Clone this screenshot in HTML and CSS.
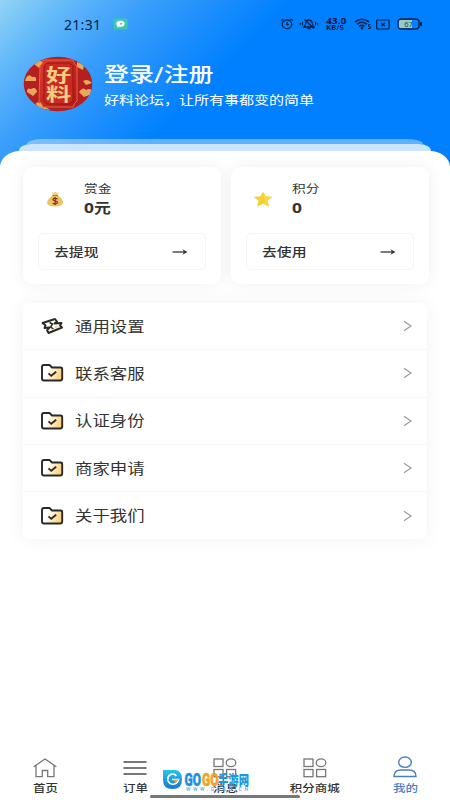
FILE: index.html
```html
<!DOCTYPE html>
<html lang="zh-CN">
<head>
<meta charset="utf-8">
<title>我的</title>
<link rel="stylesheet" href="styles.css">
</head>
<body>
<svg width="0" height="0" class="defs">
  <defs>
    <linearGradient id="fold" x1="0" x2="1" y1="0" y2=".3"><stop offset=".35" stop-color="#fff"/><stop offset="1" stop-color="#ffd287"/></linearGradient>
    <symbol id="folder" viewBox="0 0 24 20">
      <path d="M2 4Q2 2 4 2H9.500L12 4.500H20.500Q22.200 4.500 22.200 6V15.500Q22.200 17.500 20.200 17.500H4Q2 17.500 2 15.500Z" fill="url(#fold)" stroke="#2b2928" stroke-width="1.900" stroke-linejoin="round"/>
      <path d="M8.500 10.300L11.200 12.800L16.200 8.700" fill="none" stroke="#2b2928" stroke-width="1.800"/>
    </symbol>
    <symbol id="chev" viewBox="0 0 9 12"><path d="M1 1.300L8 6L1 10.700" fill="none" stroke="#999" stroke-width="1.200"/></symbol>
    <symbol id="arrow" viewBox="0 0 16 8"><path d="M.5 4H13" fill="none" stroke="#333" stroke-width="1.300"/><path d="M10.500 1.200L15.500 4L10.500 6.800L12 4Z" fill="#333"/></symbol>
    <symbol id="grid" viewBox="0 0 24 20"><g fill="none" stroke="#777" stroke-width="1.300"><rect x="1" y="1" width="9" height="7.500"/><ellipse cx="18" cy="4.800" rx="4.800" ry="3.900"/><rect x="1" y="11.500" width="9" height="7.200"/><rect x="13.600" y="11.500" width="9" height="7.200"/></g></symbol>
  </defs>
</svg>
<main class="app">
  <header class="hero">
    <div class="status">
      <span class="clock">21:31</span>
      <svg class="msg" width="15" height="12" viewBox="0 0 15 12"><rect x=".5" y=".5" width="14" height="11" rx="2" fill="#3cc7ae"/><ellipse cx="7.500" cy="5.700" rx="4.200" ry="3" fill="#fff"/><path d="M5 7L4 9.500L8 8Z" fill="#fff"/><circle cx="8" cy="5.700" r="1" fill="#3cc7ae"/></svg>
      <div class="status-icons">
        <svg width="14" height="12" viewBox="0 0 14 12" fill="none" stroke="#082350" stroke-width="1.300"><ellipse cx="7" cy="6.300" rx="4.800" ry="4.300"/><path d="M1 2.500L3.500 1M13 2.500L10.500 1M7 4V6.600H9"/></svg>
        <svg class="bell" width="20" height="12" viewBox="0 0 20 12" fill="none" stroke="#082350" stroke-width="1.300"><path d="M5 9H15Q13.500 7.500 13.300 5Q12.500 2 10 2Q7.500 2 6.700 5Q6.500 7.500 5 9ZM8.500 10.500H11.500M5.500 1.500L15 10.500M3.500 4V7.500M1.300 5V6.700M16.500 4V7.500M18.700 5V6.700"/></svg>
        <span class="speed"><b class="wide">43.0</b><i class="wide">KB/S</i></span>
        <svg class="wifi" width="18" height="12" viewBox="0 0 18 12" fill="none" stroke="#082350" stroke-width="1.600"><path d="M1 4Q8 -1.500 15 4M3 6.300Q8 2.300 13 6.300M5.200 8.500Q8 6.300 10.500 8.500"/><circle cx="8" cy="10.300" r=".6"/><path d="M16.500 6.500H14.500V8.500H16.300V10.500H14" stroke-width="1"/></svg>
        <svg class="sim" width="14" height="11" viewBox="0 0 14 11" fill="none" stroke="#082350" stroke-width="1.200"><rect x=".7" y="1" width="12.400" height="9" rx="1"/><path d="M5 4L9 7M9 4L5 7" stroke-width="1.500"/></svg>
        <svg class="battery" width="26" height="12" viewBox="0 0 26 12"><path d="M3 2H15V10H3Q2 10 2 9V3Q2 2 3 2Z" fill="#9ccbbd"/><rect x="1" y="1" width="21" height="10" rx="3" fill="none" stroke="#082350" stroke-width="1.300"/><path d="M24 4V8" stroke="#082350" stroke-width="1.800"/><text x="11.500" y="8.600" text-anchor="middle" class="bat">67</text></svg>
      </div>
    </div>
    <div class="profile">
      <svg class="avatar" width="70" height="56" viewBox="0 0 70 56">
        <defs>
          <clipPath id="oval"><ellipse cx="35" cy="28" rx="34.300" ry="27.300"/></clipPath>
          <linearGradient id="red" x1="0" y1="0" x2="1" y2="1"><stop stop-color="#df3a2c"/><stop offset="1" stop-color="#b3171a"/></linearGradient>
        </defs>
        <g clip-path="url(#oval)">
          <rect width="70" height="56" fill="#b51f20"/>
          <g fill="#e7a959"><path d="M3 22Q6 17 9 21Q14 20 13 25H2Z"/><path d="M4 36Q4 31 8 33Q13 30 14 36L10 40Z"/><path d="M11 8Q17 2 20 7L16 12Z"/><path d="M54 6L61 9L60 14L54 11Z"/><path d="M56 36Q60 30 63 34Q69 31 69 38L61 41Z"/><path d="M60 25Q65 22 69 27L63 29Z"/><path d="M13 47Q16 45 20 49L27 54L14 52Z"/></g>
          <path d="M17 10Q20 8 20 4H50Q51 8 54 10V45Q51 47 50 51H20Q19 47 16 45Z" fill="url(#red)" stroke="#e0683c" stroke-width="1"/>
          <path d="M21 10L24 7H46L50 10V45L46 48H24L21 45Z" fill="#cb2a22" stroke="#8f1817" stroke-width="1"/>
          <g class="avatar-text"><text transform="translate(35.500 25.500) scale(1.400 1)" text-anchor="middle">好</text><text transform="translate(35.500 44.500) scale(1.400 1)" text-anchor="middle">料</text></g>
        </g>
      </svg>
      <div class="who"><div class="login wide">登录/注册</div><div class="tagline wide">好料论坛，让所有事都变的简单</div></div>
    </div>
    <div class="layer back"></div>
    <div class="layer front"></div>
  </header>
  <section class="sheet">
    <div class="cards">
      <div class="card">
        <div class="balance">
          <svg width="18" height="16" viewBox="0 0 18 16"><path d="M6 1L8 2L9 .5L11 2L13 1L11.300 4.500H7Z" fill="#f3cd78"/><path d="M7 4H11.500Q17 8 17 11.500Q17 15.500 9 15.500T1 11.500Q1.500 8 7 4Z" fill="#efc263"/><path d="M6.500 4.600H12" stroke="#a8723d"/><path d="M11.500 7.800Q7 6.500 7 8.600Q7 9.800 9.200 10Q11.600 10.300 11.500 11.700Q11 13.500 6.700 12.300M9.200 6V14" fill="none" stroke="#7c3820" stroke-width="1.200"/></svg>
          <div><div class="label wide">赏金</div><div class="amount wide"><b>0</b>元</div></div>
        </div>
        <div class="action"><span class="wide">去提现</span><svg width="16" height="8"><use href="#arrow"/></svg></div>
      </div>
      <div class="card">
        <div class="balance">
          <svg width="20" height="16" viewBox="0 0 20 16"><path d="M10 .5L12.500 5.300L19.500 6L14.500 9.700L16 15.500L10 12.800L4 15.500L5.500 9.700L.5 6L7.500 5.300Z" fill="#f8cf32"/><path d="M10 1L12.500 5.300L19 6L14 9.500L15.500 15L11 12Z" fill="#fbd640"/></svg>
          <div><div class="label wide">积分</div><div class="amount wide"><b>0</b></div></div>
        </div>
        <div class="action"><span class="wide">去使用</span><svg width="16" height="8"><use href="#arrow"/></svg></div>
      </div>
    </div>
    <div class="menu">
      <div class="row"><svg class="lead" width="24" height="20" viewBox="0 0 24 20"><path d="M2.500 7L15 3L17 5.500L14.500 7.500L21.500 7L20 9.500L22 11.500L8.500 17L7 14.300L9.500 11.500L4.500 12L5.500 9.300Z" fill="#fffbed" stroke="#2b2928" stroke-width="1.900" stroke-linejoin="round"/><path d="M9.500 6.500L12.500 8L10.500 11L13.500 13" fill="none" stroke="#2b2928" stroke-width="1.500"/><path d="M15 10.500L19 9.500L15.500 12.500Z" fill="#e8cc80"/></svg><span class="wide">通用设置</span><svg class="chev" width="9" height="12"><use href="#chev"/></svg></div>
      <div class="row"><svg class="lead" width="24" height="20"><use href="#folder"/></svg><span class="wide">联系客服</span><svg class="chev" width="9" height="12"><use href="#chev"/></svg></div>
      <div class="row"><svg class="lead" width="24" height="20"><use href="#folder"/></svg><span class="wide">认证身份</span><svg class="chev" width="9" height="12"><use href="#chev"/></svg></div>
      <div class="row"><svg class="lead" width="24" height="20"><use href="#folder"/></svg><span class="wide">商家申请</span><svg class="chev" width="9" height="12"><use href="#chev"/></svg></div>
      <div class="row"><svg class="lead" width="24" height="20"><use href="#folder"/></svg><span class="wide">关于我们</span><svg class="chev" width="9" height="12"><use href="#chev"/></svg></div>
    </div>
  </section>
  <nav class="tabs">
    <div class="tab"><svg width="24" height="20" viewBox="0 0 24 20" fill="none" stroke="#777" stroke-width="1.300"><path d="M.7 8.700L12 1L23.300 8.700M3 7.500V18.700H9.300V12.500H14.700V18.700H21V7.500"/></svg><span>首页</span></div>
    <div class="tab"><svg width="24" height="20" viewBox="0 0 24 20" stroke="#777" stroke-width="2"><path d="M.5 4H23.500M.5 10H23.500M.5 16H23.500"/></svg><span>订单</span></div>
    <div class="tab"><svg width="24" height="20"><use href="#grid"/></svg><span>消息</span></div>
    <div class="tab"><svg width="24" height="20"><use href="#grid"/></svg><span>积分商城</span></div>
    <div class="tab active"><svg width="24" height="22" viewBox="0 0 24 22" fill="none" stroke="#4a7fc5" stroke-width="1.400"><ellipse cx="12" cy="6.200" rx="6.300" ry="5.200"/><path d="M1 20.500Q1 14 8 14H16Q23 14 23 20.500Z"/></svg><span>我的</span></div>
  </nav>
  <div class="home-bar"></div>
  <svg class="mark" width="90" height="24" viewBox="0 0 90 24">
    <defs><linearGradient id="sky" x1="0" y1="0" x2="0" y2="1"><stop stop-color="#29c4ee"/><stop offset="1" stop-color="#1478d2"/></linearGradient></defs>
    <path d="M1 1H14Q20 2 20 10.500Q20 20 10.500 20Q1 20 1 11Z" fill="url(#sky)"/>
    <path d="M14.500 7Q12 4 8.500 5.500Q5 7.500 6 12Q8 16 12.500 15Q16 13.500 16.500 10.500H10" fill="none" stroke="#fff" stroke-width="1.600"/><path d="M10.500 10.500H17L14 13.500Z" fill="#f7a51c"/>
    <g class="mark-text"><text x="22.500" y="17" textLength="16.500" lengthAdjust="spacingAndGlyphs" fill="#1d91dc" stroke="#1d91dc">GO</text><text x="40" y="17" textLength="16.500" lengthAdjust="spacingAndGlyphs" fill="#f7a01d" stroke="#f7a01d">GO</text><text class="cn" x="56" y="15.500" textLength="31" lengthAdjust="spacingAndGlyphs" fill="#1c98dd">手游网</text></g>
    <text class="url" x="24" y="21.500" textLength="62">WWW.GOGO.CN</text>
  </svg>
</main>
</body>
</html>
```

FILE: styles.css
```css
* { box-sizing: border-box; }
body { margin: 0; background: #fff; color: #333; font-family: Roboto, "Noto Sans CJK SC", sans-serif; }
svg { display: block; flex: none; }
.defs { position: absolute; }
.app { position: relative; width: 450px; height: 800px; overflow: hidden; display: flex; flex-direction: column; background: linear-gradient(135deg, #92d4f5 0, #62b8fa 50px, #3a9efb 105px, #1b8dfd 160px, #0080ff 205px); }
/* Horizontally extended lettering used across the interface */
.wide { display: block; white-space: nowrap; transform: scaleX(1.2); transform-origin: left center; }
.hero { height: 151px; flex: none; display: flex; flex-direction: column; align-items: center; }
.status { width: 450px; height: 48px; padding: 0 27px 0 64px; display: flex; align-items: center; color: #07204a; }
.clock { width: 49px; font: 14px "Noto Sans", sans-serif; letter-spacing: .3px; }
.status-icons { margin-left: auto; display: flex; align-items: center; }
.bell { margin: 0 7px 0 5px; }
.speed { width: 20px; line-height: 7px; }
.wifi { margin: 0 4px 0 8px; }
.battery { margin-left: 7px; }
.speed b { font: bold 8.500px/8px "Noto Sans", sans-serif; }
.speed i { font: bold 6.500px/6px "Noto Sans", sans-serif; }
.bat { font: 7.500px "Noto Sans", sans-serif; fill: #174964; }
.profile { width: 450px; height: 91px; padding: 8px 0 0 23px; display: flex; align-items: flex-start; gap: 11px; color: #fff; }
.avatar-text { font: 700 18px "Noto Sans CJK SC", sans-serif; fill: #f5cd80; }
.login { margin-top: 5px; font-size: 20.800px; font-weight: 500; line-height: 28px; }
.tagline { font-size: 12.500px; line-height: 23px; }
.layer { flex: none; }
.back { width: 396px; height: 5px; background: rgba(255,255,255,.38); border-radius: 16px 16px 0 0 / 5px 5px 0 0; }
.front { width: 412px; height: 7px; background: #cce5ff; border-radius: 12px 12px 0 0 / 7px 7px 0 0; }
.sheet { flex: 1; padding: 16px 22px 0 23px; background: #fff; border-radius: 20px 20px 0 0 / 16px 16px 0 0; }
.cards { display: grid; grid-template-columns: 198px 198px; gap: 10px; }
.card { height: 117px; padding: 14px 15px; border-radius: 9px; background: #fff; box-shadow: 0 0 16px rgba(0,0,0,.065); }
.balance { height: 52px; display: grid; grid-template-columns: 46px 1fr; align-items: start; }
.balance svg { justify-self: center; margin: 10px 13px 0 0; }
.label { font-size: 11.400px; line-height: 16px; }
.amount { font-size: 14px; line-height: 20px; font-weight: bold; }
.amount b { font: 700 14.500px "Noto Sans", sans-serif; }
.action { height: 37px; padding: 0 17px 0 15px; border: 1px solid #f5f5f5; border-radius: 5px; display: flex; justify-content: space-between; align-items: center; font-size: 12.400px; font-weight: 500; }
.menu { width: 404px; margin-top: 19px; border-radius: 6px; box-shadow: 0 0 20px rgba(0,0,0,.055); background: #fff; }
.row { height: 47.300px; padding: 0 15px 0 17px; display: flex; align-items: center; border-bottom: 1px solid #f6f6f6; font-size: 14.500px; }
.row span { padding-bottom: 2px; }
.row:last-child { border: 0; }
.lead { margin-right: 11px; }
.chev { margin-left: auto; }
.tabs { height: 49px; background: #fff; display: grid; grid-template-columns: repeat(5, 90px); }
.tab { display: flex; flex-direction: column; align-items: center; font-size: 10.400px; line-height: 16px; padding-top: 7px; }
.tab span { margin-top: 3px; transform: scaleX(1.2); white-space: nowrap; font-weight: 500; }
.active { color: #4a7fc5; padding-top: 5px; }
.home-bar { position: absolute; left: 150px; top: 795px; width: 150px; height: 3px; border-radius: 2px; background: #777; }
.mark { position: absolute; left: 162px; top: 769px; }
.mark-text { font: 900 18px Roboto, sans-serif; stroke-width: .5px; }
.mark-text .cn { font: 900 14px "Noto Sans CJK SC", sans-serif; }
.url { font: bold 5px Roboto, sans-serif; fill: #78b9e4; }
```
